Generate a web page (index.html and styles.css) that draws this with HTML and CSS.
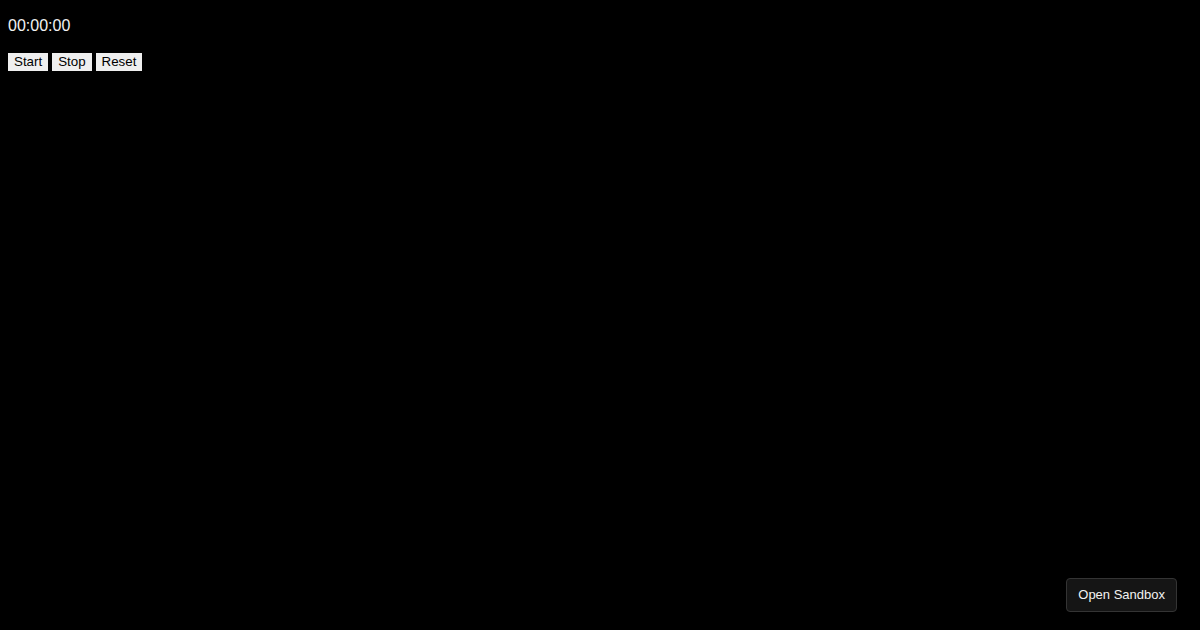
FILE: index.html
```html
<!DOCTYPE html>
<html lang="en">
<head>
<meta charset="utf-8">
<title>Stopwatch</title>
<link rel="stylesheet" href="styles.css">
</head>
<body>
<main class="stopwatch">
  <p class="time">00:00:00</p>
  <div class="controls">
    <button class="control" type="button">Start</button>
    <button class="control" type="button">Stop</button>
    <button class="control" type="button">Reset</button>
  </div>
</main>
<button class="open-sandbox" type="button">Open Sandbox</button>
</body>
</html>
```

FILE: styles.css
```css
body {
  margin: 0;
  padding: 8px;
  background: #000;
  color: #f2f2f2;
  font-family: "Liberation Sans", Arial, sans-serif;
}

.time {
  margin: 8px 0 18px;
  font-size: 16px;
  line-height: 19px;
}

.controls {
  display: flex;
  gap: 4px;
}

.control {
  padding: 1px 6px;
  border: 0;
  background: #efefef;
  color: #000;
  font-family: inherit;
  line-height: 16px;
}

.open-sandbox {
  position: fixed;
  right: 23px;
  bottom: 18px;
  padding: 8px 11px;
  border: 1px solid #343434;
  border-radius: 4px;
  background: #151515;
  color: #f2f2f2;
  font-family: inherit;
  font-size: 13px;
  line-height: 16px;
}
```
